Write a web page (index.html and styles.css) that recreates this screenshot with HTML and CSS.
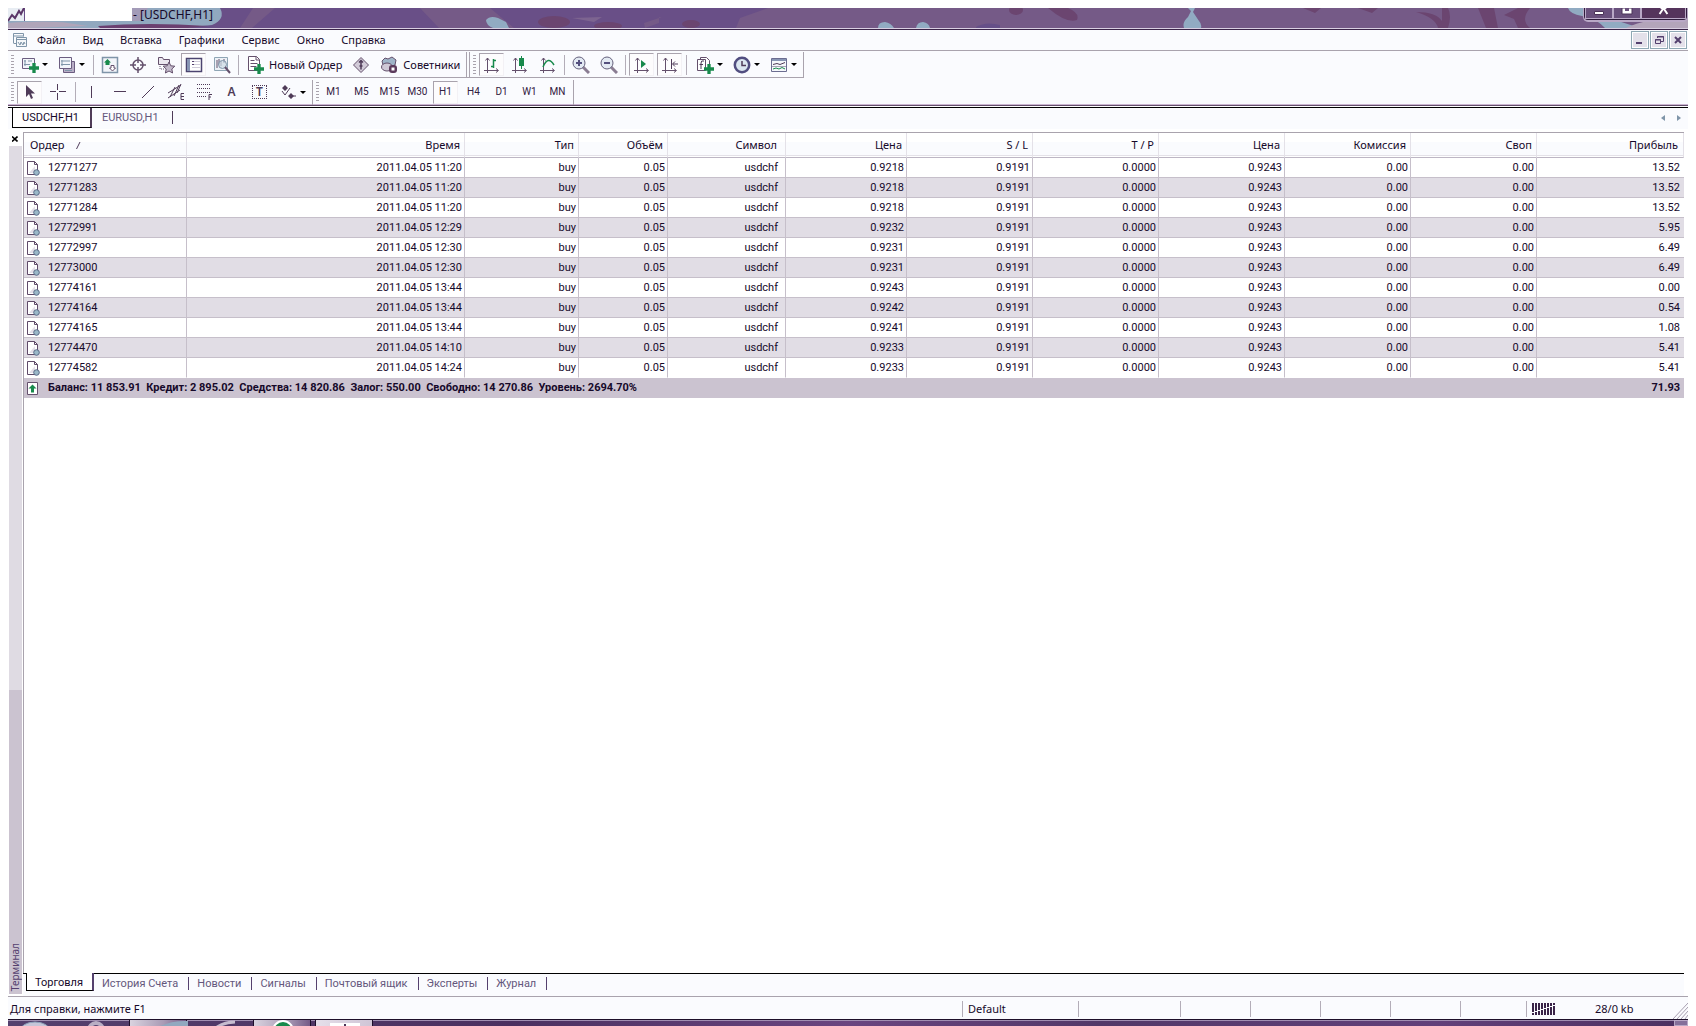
FILE: index.html
```html
<!DOCTYPE html>
<html lang="ru">
<head>
<meta charset="utf-8">
<title>[USDCHF,H1]</title>
<link rel="stylesheet" href="styles.css">
</head>
<body>
<svg class="defs" aria-hidden="true">
  <symbol id="doc" viewBox="0 0 14 15"><path d="M1.500 .5h7l3 3v10h-10z" fill="#fff" stroke="#5f4a68"/><path d="M8.500 .5v3h3" fill="none" stroke="#5f4a68"/><path d="M3 12l6-7v7z" fill="#e4dfe8"/><circle cx="10.500" cy="11.500" r="2.800" fill="#9ab8c8" stroke="#5a6a88"/></symbol>
  <symbol id="axes" viewBox="0 0 18 18"><path d="M4.500 2v15M1 14.500h14" stroke="#64506c" fill="none"/><path d="M2.500 4.500l2-2.500 2 2.500M13 12.500l2.500 2-2.500 2" fill="none" stroke="#64506c"/></symbol>
  <symbol id="plus" viewBox="0 0 9 9"><path d="M3 0h3v3h3v3H6v3H3V6H0V3h3z" fill="#188a4c"/></symbol>
</svg>
<div class="window">
  <header class="titlebar">
    <svg class="titleart" viewBox="0 0 1680 20" preserveAspectRatio="none" aria-hidden="true">
      <path fill="#694f87" d="M0 0h1680v20H0z"/>
      <path fill="#755a87" d="M245 0h22l-23 20h-12zM412 0h70l24 20h-75zM760 0h920v20H728l4-10zM636 15l18-6h-3v6l-14 5z"/>
      <path fill="#91a8bf" d="M0 13h120V0h92q6 11-8 17l-30 3H0z"/>
      <path fill="#a39bb8" d="M120 0h20l-8 13h-12z"/>
      <path fill="#b0a5b9" d="M0 15q40-3 60 0l20 3-60 2H0z"/>
      <path fill="#6b3f70" d="M90 18q50-4 110 0l-20 2H92z"/>
      <path fill="#91abc2" d="M478 12q4-5 12-2l8 4 3 6h-16q-7-3-7-8zM870 20q0-6 7-6 6 1 9 6zM908 20q1-6 7-6 6 1 7 6zM1176 20q-2-6 4-11l3-6-3-3h7l-2 4 6 9q3 3 2 7zM1560 0h26l6 12h15l25 8h-35q-8-9-23-12-12-2-14-8z"/>
      <path fill="#b3a5ba" d="M1618 20q20-10 62-12v12z"/>
      <g fill="#6b4570"><ellipse cx="546" cy="14" rx="16" ry="6"/><ellipse cx="600" cy="18" rx="14" ry="4"/><ellipse cx="683" cy="16" rx="9" ry="4"/><ellipse cx="1008" cy="2" rx="7" ry="5"/><path d="M1040 0h20q12 5 9 12-10 4-29-12zM1295 0h18l-6 5zM1350 0h20l-6 5zM1408 4q20 0 26 9V0h6q4 8 0 20h-10q-2-10-22-16zM1470 0h16l4 20h-12zM1510 0h12q-10 12 0 20h-12l-4-9-10-4z"/></g>
      <path fill="#664f88" d="M968 19q10-6 24-2v3h-24z"/><path fill="#7d6490" d="M564 10l30-1-8 5z"/>
    </svg>
    <div class="titletext"><svg class="appicon" viewBox="0 0 17 14"><path fill="#e8edf3" d="M0 0h16v13H0z"/><path d="M0 13l4-6 3 3 4-7 2 3 3-6" fill="none" stroke="#5a3668" stroke-width="2"/></svg><span class="blank"></span><span>- [USDCHF,H1]</span></div>
    <div class="winbuttons">
      <button aria-label="Свернуть"><svg viewBox="0 0 28 12"><path d="M9.500 3.500h9v3h-9z" fill="#fff" stroke="#4b3358"/></svg></button><button aria-label="Развернуть"><svg viewBox="0 0 28 12"><path d="M9 0h10v6H9z" fill="#fff" stroke="#4b3358"/><path d="M12 0h4v3h-4z" fill="#69507c"/></svg></button><button class="closebtn" aria-label="Закрыть"><svg viewBox="0 0 46 12"><path d="M19 6l4-6 4 6M20 0h6" stroke="#fff" stroke-width="2" fill="none"/></svg></button>
    </div>
  </header>

  <nav class="menubar">
    <svg class="menuicon" viewBox="0 0 15 15"><path d="M.5 10V.5h10v3M.5 3h10M.5 10.500h3" fill="none" stroke="#7f95a9"/><path d="M3.500 4.500h10v9h-10zM3.500 6.500h10" fill="#f4f7fa" stroke="#7f95a9"/><path d="M5 9l2 3 1-3 2 3 1-3 1 2" fill="none" stroke="#7f95a9"/></svg>
    <a href="#">Файл</a><a href="#">Вид</a><a href="#">Вставка</a><a href="#">Графики</a><a href="#">Сервис</a><a href="#">Окно</a><a href="#">Справка</a>
    <div class="mdi">
      <button aria-label="Свернуть окно"><svg viewBox="0 0 12 12"><path d="M2 8h6v2H2z" fill="#54406e"/></svg></button>
      <button aria-label="Восстановить окно"><svg viewBox="0 0 12 12"><path d="M4.500 4V2.500h6v5H8M4 3h7M2.500 5.500h5v4h-5zM2 6h6" fill="none" stroke="#54406e"/></svg></button>
      <button aria-label="Закрыть окно"><svg viewBox="0 0 12 12"><path d="M3 3l6 6M9 3L3 9" stroke="#54406e" stroke-width="2"/></svg></button>
    </div>
  </nav>

  <div class="toolbar toolbar-main">
    <i class="grip"></i>
    <button class="tool drop" aria-label="Новый график"><svg viewBox="0 0 18 18"><path d="M1.500 2.500h12v10h-12z" fill="#f2f5fa" stroke="#6b5d80"/><path d="M4 4v6M3 8.500h6M3 5h2M7 5h4" stroke="#7f95a9"/><use href="#plus" x="8" y="7" width="10" height="10"/></svg></button>
    <button class="tool drop" aria-label="Профили"><svg viewBox="0 0 18 18"><path d="M5.500 5.500h11v11h-11z" fill="#b9aec6" stroke="#6b5d80"/><path d="M1.500 1.500h12v11h-12z" fill="#f2f5fa" stroke="#6b5d80"/><path d="M4 4v6M3 8.500h9M3 5h9M7 14.500h7" stroke="#7f95a9"/></svg></button>
    <i class="sep"></i>
    <button class="tool" aria-label="Обзор рынка"><svg viewBox="0 0 18 18"><path d="M1.500 1.500h15v15h-15z" fill="#f2f5fa" stroke="#7f95a9" stroke-width="1.500"/><path d="M6.500 3l3.500 3.500H8.500V9h-4V6.500H3z" fill="#188a4c"/><path d="M11.500 15L8.500 12h1.500v-2.500h3V12h1.500z" fill="#fff" stroke="#64506c"/></svg></button>
    <button class="tool" aria-label="Окно данных"><svg viewBox="0 0 18 18"><circle cx="9" cy="9" r="5" fill="none" stroke="#64506c" stroke-width="1.500"/><path d="M9 1v6M9 11v6M1 9h6M11 9h6" stroke="#64506c" stroke-width="1.500"/></svg></button>
    <button class="tool" aria-label="Навигатор"><svg viewBox="0 0 18 18"><path d="M1.500 8.500v-7h4l1 2h6v5z" fill="#ece8f0" stroke="#64506c"/><path d="M3 10v3h4" fill="none" stroke="#64506c" stroke-dasharray="1 1"/><path d="M12 6l1.800 3.800 4 .4-3 2.800.8 4-3.600-2-3.600 2 .8-4-3-2.800 4-.4z" fill="#c3bacb" stroke="#64506c"/></svg></button>
    <button class="tool on" aria-label="Терминал"><svg viewBox="0 0 18 18"><path d="M1.500 2.500h15v13h-15z" fill="#fff" stroke="#4c4470" stroke-width="1.500"/><path d="M2 3h3v12H2z" fill="#8895b4"/><path d="M7 5.500h8M7 8.500h8M7 11.500h8" stroke="#d0ccd9"/><path d="M7 5.500h2M7 8.500h2" stroke="#54406e"/></svg></button>
    <button class="tool" aria-label="Тестер стратегий"><svg viewBox="0 0 18 18"><path d="M1.500 1.500h13v13h-13z" fill="#edf1f6" stroke="#8fa5b5"/><path d="M4 4v8M6 3v6M8 5v5M11 3v4" stroke="#64506c"/><circle cx="9.500" cy="8.500" r="4" fill="#cddbe6" fill-opacity=".7" stroke="#7f95a9"/><path d="M12 11l5 6" stroke="#64506c" stroke-width="2"/></svg></button>
    <i class="sep"></i>
    <button class="tool label"><svg viewBox="0 0 18 18"><path d="M2.500 .5h8l3 3v11h-11z" fill="#fff" stroke="#64506c"/><path d="M10 .5v3.500h3M4.500 4.500h4M4.500 7.500h7M4.500 10.500h6" fill="none" stroke="#64506c"/><use href="#plus" x="8" y="8" width="10" height="10"/></svg><span>Новый Ордер</span></button>
    <button class="tool" aria-label="MetaEditor"><svg viewBox="0 0 18 18"><path d="M9 1.500L16.500 9 9 16.500 1.500 9z" fill="#d2cbd8" stroke="#64506c"/><path d="M9 4.500v9M7 6.500l2-2 2 2M7.500 10h3" stroke="#4f3b58" fill="none" stroke-width="1.500"/></svg></button>
    <button class="tool label"><svg viewBox="0 0 18 18"><path d="M2 5l3-3 3 1 4-2 4 3-1 5-6 2-6-2z" fill="#9fb4c8" stroke="#64506c"/><ellipse cx="7" cy="11" rx="5.500" ry="4" fill="#cfc8d6" stroke="#64506c"/><rect x="9" y="9" width="8" height="8" rx="3" fill="#5c3b5c"/><path d="M11.500 11.500h3v3h-3z" fill="#fff"/></svg><span>Советники</span></button>
    <i class="endline"></i>
    <i class="endline"></i><i class="grip"></i>
    <button class="tool on" aria-label="Бары"><svg viewBox="0 0 18 18"><use href="#axes"/><path d="M10.500 3v9M8 10.500h2M11 4.500h2" stroke="#188a4c" stroke-width="1.500"/></svg></button>
    <button class="tool" aria-label="Свечи"><svg viewBox="0 0 18 18"><use href="#axes"/><path d="M10.500 0v13" stroke="#188a4c"/><path d="M8 2h5v8H8z" fill="#188a4c"/></svg></button>
    <button class="tool" aria-label="Линия"><svg viewBox="0 0 18 18"><use href="#axes"/><path d="M4 11q5-12 11-2" stroke="#188a4c" stroke-width="1.500" fill="none"/></svg></button>
    <i class="sep"></i>
    <button class="tool" aria-label="Увеличить"><svg viewBox="0 0 18 18"><path d="M11 11l6 6" stroke="#8a7d92" stroke-width="3"/><circle cx="7" cy="7" r="6" fill="#e3eaf3" stroke="#64607c"/><path d="M7 4v6M4 7h6" stroke="#54507e" stroke-width="2"/></svg></button>
    <button class="tool" aria-label="Уменьшить"><svg viewBox="0 0 18 18"><path d="M11 11l6 6" stroke="#8a7d92" stroke-width="3"/><circle cx="7" cy="7" r="6" fill="#e3eaf3" stroke="#64607c"/><path d="M4 7h6" stroke="#54507e" stroke-width="2"/></svg></button>
    <i class="sep"></i>
    <button class="tool on" aria-label="Автопрокрутка"><svg viewBox="0 0 18 18"><use href="#axes"/><path d="M8 4l5 4-5 4z" fill="#188a4c"/></svg></button>
    <button class="tool on" aria-label="Сдвиг графика"><svg viewBox="0 0 18 18"><use href="#axes"/><path d="M10.500 3v10M17 8h-5M14 5.500L11.500 8l2.500 2.500" stroke="#4f3b58" fill="none"/></svg></button>
    <i class="sep"></i>
    <button class="tool drop wide" aria-label="Индикаторы"><svg viewBox="0 0 18 18"><path d="M4.500 4V1.500h6l3 3v8h-3" fill="#fff" stroke="#64506c"/><path d="M1.500 3.500h8v11h-8z" fill="#fff" stroke="#64506c"/><path d="M8 5q-3-1-3 2v6M3.500 8.500H7" fill="none" stroke="#4f3b58"/><use href="#plus" x="8" y="8" width="10" height="10"/></svg></button>
    <button class="tool drop" aria-label="Периоды"><svg viewBox="0 0 18 18"><circle cx="9" cy="9" r="7.200" fill="#dbe6f0" stroke="#514e80" stroke-width="2.500"/><path d="M9 5v4.500h4" fill="none" stroke="#4f3b58" stroke-width="1.500"/></svg></button>
    <button class="tool drop" aria-label="Шаблоны"><svg viewBox="0 0 18 18"><path d="M1.500 2.500h15v13h-15z" fill="#f5f8fb" stroke="#6b6d90"/><path d="M2 3h14v2H2z" fill="#8895b4"/><path d="M3 8.500l4-1 3 1 5-2" fill="none" stroke="#4f3b58"/><path d="M2 10.500h14" stroke="#a9a3b5"/><path d="M3 13l3-1 3 1 3-1.500 3 1.500" fill="none" stroke="#188a4c"/></svg></button>
    <i class="lastline"></i>
  </div>

  <div class="toolbar toolbar-draw">
    <i class="grip"></i>
    <button class="tool on" aria-label="Курсор"><svg viewBox="0 0 18 18"><path d="M5 2v12l3-3 2 5 2-1-2-4.500h4z" fill="#4f3b58"/></svg></button>
    <button class="tool" aria-label="Перекрестие"><svg viewBox="0 0 18 18"><path d="M8.500 1v6M8.500 10v7M1 8.500h6M10 8.500h7" stroke="#4f3b58"/></svg></button>
    <i class="sep"></i>
    <button class="tool" aria-label="Вертикальная линия"><svg viewBox="0 0 18 18"><path d="M8.500 3v12" stroke="#4f3b58"/></svg></button>
    <button class="tool" aria-label="Горизонтальная линия"><svg viewBox="0 0 18 18"><path d="M3 8.500h12" stroke="#4f3b58"/></svg></button>
    <button class="tool" aria-label="Трендовая линия"><svg viewBox="0 0 18 18"><path d="M3 15L15 3" stroke="#4f3b58"/></svg></button>
    <button class="tool" aria-label="Канал"><svg viewBox="0 0 18 18"><path d="M1 10L14 2M1 15l12-8M3 14L8 4M7 13l5-11M10 10l4-9" stroke="#4f3b58"/><path d="M17 10.500h-3v6h3M14 13.500h3" stroke="#4f3b58" fill="none"/></svg></button>
    <button class="tool" aria-label="Фибоначчи"><svg viewBox="0 0 18 18"><path d="M2 1.500h13M2 5.500h13M2 9.500h13M2 13.500h9" stroke="#4f3b58" stroke-dasharray="1 1"/><path d="M17 11.500h-3v5.500M14 14h2" stroke="#4f3b58" fill="none"/></svg></button>
    <button class="tool letter">A</button>
    <button class="tool letter boxed" aria-label="Метка"><span>T</span></button>
    <button class="tool drop" aria-label="Стрелки"><svg viewBox="0 0 18 18"><path d="M6 2l3 3-3 3-3-3zM2 5h4M12 10l3 3-3 3-3-3z" fill="#4f3b58"/><path d="M3 8l3 4 5-7M12 13h5" fill="none" stroke="#4f3b58"/></svg></button>
    <i class="endline"></i><i class="grip"></i>
    <button class="tool tf">M1</button><button class="tool tf">M5</button><button class="tool tf">M15</button><button class="tool tf">M30</button><button class="tool tf on">H1</button><button class="tool tf">H4</button><button class="tool tf">D1</button><button class="tool tf">W1</button><button class="tool tf">MN</button>
    <i class="lastline"></i>
  </div>

  <div class="charttabs">
    <a class="tab active" href="#">USDCHF,H1</a><a class="tab" href="#">EURUSD,H1</a>
    <div class="scrollers"><button aria-label="Назад"><svg viewBox="0 0 4 6"><path d="M4 0v6L0 3z" fill="#7f95a9"/></svg></button><button aria-label="Вперёд"><svg viewBox="0 0 4 6"><path d="M0 0v6l4-3z" fill="#7f95a9"/></svg></button></div>
  </div>

  <main class="terminal">
    <aside class="rail">
      <button class="railclose" aria-label="Закрыть терминал"><svg viewBox="0 0 6 6"><path d="M0 .5l5.500 5M5.500 .5L0 5.500" stroke="#000" stroke-width="1.600"/></svg></button>
      <div class="railtop"></div>
      <div class="railbottom"><span>Терминал</span></div>
    </aside>
    <section class="pane">
      <div class="tablewrap">
      <table>
        <colgroup><col class="c-order"><col class="c-time"><col class="c-type"><col class="c-vol"><col class="c-sym"><col class="c-open"><col class="c-num"><col class="c-num"><col class="c-num"><col class="c-num"><col class="c-num"><col></colgroup>
        <thead><tr><th>Ордер<svg class="sort" viewBox="0 0 5 7"><path d="M.5 7L4 0" stroke="#4f3b58" fill="none"/></svg></th><th>Время</th><th>Тип</th><th>Объём</th><th>Символ</th><th>Цена</th><th>S / L</th><th>T / P</th><th>Цена</th><th>Комиссия</th><th>Своп</th><th>Прибыль</th></tr></thead>
        <tbody>
          <tr><td><svg><use href="#doc"/></svg>12771277</td><td>2011.04.05 11:20</td><td>buy</td><td>0.05</td><td>usdchf</td><td>0.9218</td><td>0.9191</td><td>0.0000</td><td>0.9243</td><td>0.00</td><td>0.00</td><td>13.52</td></tr>
          <tr><td><svg><use href="#doc"/></svg>12771283</td><td>2011.04.05 11:20</td><td>buy</td><td>0.05</td><td>usdchf</td><td>0.9218</td><td>0.9191</td><td>0.0000</td><td>0.9243</td><td>0.00</td><td>0.00</td><td>13.52</td></tr>
          <tr><td><svg><use href="#doc"/></svg>12771284</td><td>2011.04.05 11:20</td><td>buy</td><td>0.05</td><td>usdchf</td><td>0.9218</td><td>0.9191</td><td>0.0000</td><td>0.9243</td><td>0.00</td><td>0.00</td><td>13.52</td></tr>
          <tr><td><svg><use href="#doc"/></svg>12772991</td><td>2011.04.05 12:29</td><td>buy</td><td>0.05</td><td>usdchf</td><td>0.9232</td><td>0.9191</td><td>0.0000</td><td>0.9243</td><td>0.00</td><td>0.00</td><td>5.95</td></tr>
          <tr><td><svg><use href="#doc"/></svg>12772997</td><td>2011.04.05 12:30</td><td>buy</td><td>0.05</td><td>usdchf</td><td>0.9231</td><td>0.9191</td><td>0.0000</td><td>0.9243</td><td>0.00</td><td>0.00</td><td>6.49</td></tr>
          <tr><td><svg><use href="#doc"/></svg>12773000</td><td>2011.04.05 12:30</td><td>buy</td><td>0.05</td><td>usdchf</td><td>0.9231</td><td>0.9191</td><td>0.0000</td><td>0.9243</td><td>0.00</td><td>0.00</td><td>6.49</td></tr>
          <tr><td><svg><use href="#doc"/></svg>12774161</td><td>2011.04.05 13:44</td><td>buy</td><td>0.05</td><td>usdchf</td><td>0.9243</td><td>0.9191</td><td>0.0000</td><td>0.9243</td><td>0.00</td><td>0.00</td><td>0.00</td></tr>
          <tr><td><svg><use href="#doc"/></svg>12774164</td><td>2011.04.05 13:44</td><td>buy</td><td>0.05</td><td>usdchf</td><td>0.9242</td><td>0.9191</td><td>0.0000</td><td>0.9243</td><td>0.00</td><td>0.00</td><td>0.54</td></tr>
          <tr><td><svg><use href="#doc"/></svg>12774165</td><td>2011.04.05 13:44</td><td>buy</td><td>0.05</td><td>usdchf</td><td>0.9241</td><td>0.9191</td><td>0.0000</td><td>0.9243</td><td>0.00</td><td>0.00</td><td>1.08</td></tr>
          <tr><td><svg><use href="#doc"/></svg>12774470</td><td>2011.04.05 14:10</td><td>buy</td><td>0.05</td><td>usdchf</td><td>0.9233</td><td>0.9191</td><td>0.0000</td><td>0.9243</td><td>0.00</td><td>0.00</td><td>5.41</td></tr>
          <tr><td><svg><use href="#doc"/></svg>12774582</td><td>2011.04.05 14:24</td><td>buy</td><td>0.05</td><td>usdchf</td><td>0.9233</td><td>0.9191</td><td>0.0000</td><td>0.9243</td><td>0.00</td><td>0.00</td><td>5.41</td></tr>
        </tbody>
        <tfoot><tr><td colspan="11"><svg viewBox="0 0 14 15"><path d="M1.500 1.500h10v12h-10z" fill="#fff" stroke="#64506c"/><path d="M6.500 3.500l4 4H8v4H5v-4H2.500z" fill="#188a4c"/></svg>Баланс: 11 853.91&nbsp; Кредит: 2 895.02&nbsp; Средства: 14 820.86&nbsp; Залог: 550.00&nbsp; Свободно: 14 270.86&nbsp; Уровень: 2694.70%</td><td>71.93</td></tr></tfoot>
      </table>
      </div>
      <nav class="bottomtabs">
        <a class="tab active" href="#">Торговля</a><a class="tab" href="#">История Счета</a><a class="tab" href="#">Новости</a><a class="tab" href="#">Сигналы</a><a class="tab" href="#">Почтовый ящик</a><a class="tab" href="#">Эксперты</a><a class="tab" href="#">Журнал</a>
      </nav>
    </section>
  </main>

  <footer class="statusbar">
    <span class="hint">Для справки, нажмите F1</span>
    <span class="cell profile">Default</span>
    <span class="cell date"></span>
    <span class="cell price"></span><span class="cell price"></span><span class="cell price"></span><span class="cell price"></span><span class="cell volume"></span>
    <span class="cell traffic"><svg viewBox="0 0 24 12"><path d="M1 0v9M4 0v8M7 0v7M10 0v6M13 0v5M16 0v4M19 0v3M22 0v2M1 10v2M4 9v3M7 8v4M10 7v5M13 6v6M16 5v7M19 4v8M22 3v9" stroke="#3a2448" stroke-width="2"/></svg><span>28/0 kb</span></span>
    <svg class="sizegrip" viewBox="0 0 15 18"><path d="M0 18L15 2M4 18L15 6M8 18l7-8M12 18l3-4" stroke="#a89fb0"/></svg>
  </footer>
  <div class="taskbar" aria-hidden="true">
    <svg class="start" viewBox="0 0 121 7"><ellipse cx="27" cy="11" rx="15" ry="9" fill="#c6c5d8" stroke="#8fa5bd"/><circle cx="88" cy="10" r="7" fill="none" stroke="#b9aec4" stroke-width="4"/></svg>
    <span class="task"><svg viewBox="0 0 58 7"><path d="M28 7Q42 0 58 1v6z" fill="#91a8bf"/></svg></span>
    <svg class="quick" viewBox="0 0 62 7"><path d="M26 7q8-5 18-5" stroke="#c6bccf" stroke-width="3" fill="none"/></svg>
    <span class="task"><svg viewBox="0 0 58 7"><circle cx="29" cy="11" r="10" fill="#188a4c" stroke="#fff" stroke-width="2"/></svg></span>
    <span class="task bright"><svg viewBox="0 0 58 7"><path d="M14 3h30v4H14z" fill="#fff"/><path d="M28 4h2v3h-2z" fill="#4b3358"/></svg></span>
    <span class="showdesk"></span>
  </div>
</div>
</body>
</html>
```
FILE: styles.css
```css
* { box-sizing: border-box; }
body { margin: 0; background: #fff; color: #16092a; font: 11px/14px "Noto Sans", sans-serif; }
button { margin: 0; padding: 0; border: 0; background: none; color: inherit; font: inherit; }
a { color: inherit; text-decoration: none; }
svg { display: block; flex: none; }
.defs { position: absolute; width: 0; height: 0; }

.window { display: flex; flex-direction: column; height: 100vh; padding: 8px 8px 0; overflow: hidden; }
.window > * { flex: none; }

.titlebar { position: relative; display: flex; justify-content: space-between; height: 22px; border-bottom: 1px solid #3a2448; background: #d9cfe2; }
.titleart { position: absolute; inset: 0; width: 100%; height: 20px; }
.titletext { position: relative; display: flex; height: 20px; font-size: 12px; white-space: nowrap; }
.appicon { width: 17px; height: 14px; }
.blank { flex: none; width: 107px; height: 13px; margin-right: 1px; background: #fff; }
.winbuttons { position: relative; display: flex; height: 12px; margin-right: 1px; border: 1px solid #2f1c3c; border-top: 0; border-radius: 0 0 4px 4px; background: #69507c; box-shadow: 0 1px 0 1px #b9a8c6; clip-path: inset(0 -2px -2px -2px); }
.winbuttons button { display: flex; justify-content: center; width: 28px; height: 11px; border: 1px solid #b9a8c6; border-top: 0; }
.winbuttons .closebtn { width: 45px; background: #55345c; }
.winbuttons svg { width: 28px; height: 12px; }
.winbuttons .closebtn svg { width: 45px; }

.menubar { display: flex; align-items: center; gap: 17px; height: 21px; padding-left: 5px; border-bottom: 1px solid #a9a3ad; background: #fafbfe; }
.menuicon { width: 15px; height: 15px; margin-right: -8px; }
.mdi { display: flex; gap: 1px; margin-left: auto; margin-right: 1px; }
.mdi button { width: 18px; height: 18px; padding: 2px; border: 1px solid #8fa8b4; background: #e4e1ea; box-shadow: inset 0 0 0 1px #fff; }
.mdi svg { width: 12px; height: 12px; }

.toolbar { display: flex; align-items: center; gap: 3px; height: 27px; padding-left: 3px; background: #fafbfe; }
.toolbar-main { background: linear-gradient(#a9a3ad, #a9a3ad) left bottom / 796px 1px no-repeat #fafbfe; }
.toolbar-draw { padding-top: 2px; border-bottom: 1px solid #cbb5d2; }
.grip { width: 3px; height: 20px; background: repeating-linear-gradient(#a9a3ad 0 1px, transparent 1px 3px); }
.sep { width: 1px; height: 20px; margin-left: 1px; background: #b3adb8; }
.sep:nth-child(4) { margin-left: 2px; }
.endline { width: 1px; height: 25px; background: #a9a3ad; }
.endline + .endline { margin-left: -1px; }
.lastline { width: 1px; height: 25px; background: #a9a3ad; }
.tool { display: flex; align-items: center; justify-content: center; width: 25px; height: 23px; border: 1px solid transparent; }
.tool svg { width: 18px; height: 18px; }
.tool.on { border-color: #a9a3ad #f3f1f5 #f3f1f5 #a9a3ad; background: #fdfcfd; }
.tool.drop { gap: 3px; width: 34px; }
.tool.wide { width: 36px; padding-left: 2px; }
.tool.drop::after { content: ""; border: 3px solid transparent; border-top-color: #000; border-bottom: 0; }
.tool.label { gap: 5px; width: auto; padding: 0 2px 0 3px; }
.letter { color: #4f3b58; font-size: 12px; font-weight: 600; }
.boxed span { padding: 0 3px; border: 1px dotted #4f3b58; line-height: 12px; }
.tf { color: #33203f; font: 10px/14px Roboto, sans-serif; }
.toolbar-draw .grip ~ .grip { margin-right: -1px; }

.tab { color: #64577c; font: 11px/13px Roboto, sans-serif; }
.tab.active { background: #fff; color: #16092a; border: solid #000; border-width: 0 2px 1px 1px; }
.charttabs { display: flex; height: 24px; margin-bottom: 3px; padding: 2px 0 0 4px; border-top: 1px solid #64506c; background: linear-gradient(#fff 1px, #000 1px 2px, #fafbfe 2px); }
.charttabs .tab { height: 13px; margin-top: 3px; padding: 0 13px 0 10px; border-right: 1px solid #4f3b58; }
.charttabs .active { height: 20px; margin-top: 0; padding: 0 11px 0 9px; line-height: 19px; border-right-width: 2px; }
.scrollers { display: flex; gap: 12px; margin: 7px 7px 0 auto; }
.scrollers svg { width: 4px; height: 6px; }
.scrollers button { height: 6px; }

.window > .terminal { display: flex; flex: 1; min-height: 0; }
.rail { display: flex; flex-direction: column; width: 15px; padding: 0 1px; }
.railclose { height: 14px; padding: 3px; }
.railclose svg { width: 6px; height: 6px; }
.railtop { flex: 547; background: #dfdbe3; }
.railbottom { display: flex; align-items: flex-end; flex: 303; margin-bottom: 2px; padding-bottom: 3px; background: #cbc3d0; }
.railbottom span { writing-mode: vertical-rl; transform: rotate(180deg); color: #54406e; font-size: 10px; line-height: 13px; }
.pane { display: flex; flex-direction: column; flex: 1; min-width: 0; margin-right: 4px; border-top: 1px solid #a9a3ad; }
.tablewrap { flex: 1; min-height: 0; overflow: hidden; border-left: 1px solid #a9a3ad; }

table { width: 100%; table-layout: fixed; border-collapse: separate; border-spacing: 0; }
.c-order { width: 163px; }
.c-time { width: 278px; }
.c-type { width: 114px; }
.c-vol { width: 89px; }
.c-sym { width: 118px; }
.c-open { width: 121px; }
.c-num { width: 126px; }
th { height: 25px; padding: 0 4px 1px; border-right: 1px solid #e4e1e8; border-bottom: 1px solid #bdb6c4; background: linear-gradient(#fff 9px, #fafbfe 9px); box-shadow: inset 0 -1px #fff, inset 0 -2px #e4e1e8; font-weight: 400; text-align: right; }
th:first-child { padding-left: 6px; text-align: left; }
th:nth-child(5) { padding-right: 8px; }
th:last-child { padding-right: 5px; }
.sort { display: inline-block; width: 5px; height: 7px; margin-left: 12px; }
td { height: 20px; padding: 0 2px 0 3px; border-right: 1px solid #c6bfca; border-bottom: 1px solid #c6bfca; font: 11px/14px Roboto, sans-serif; text-align: right; white-space: nowrap; }
td:nth-child(5) { padding-right: 7px; }
td:last-child { padding-right: 4px; border-right: 0; }
td:first-child { padding-left: 2px; text-align: left; }
td svg { float: left; width: 14px; height: 15px; margin: 0 8px -1px 0; }
tbody tr:nth-child(even) { background: #e1dde5; }
tbody tr:last-child td { border-bottom-color: #fff; }
tfoot td { border: 0; background: #cbc3d0; font-weight: 700; }

.bottomtabs { display: flex; height: 23px; padding-left: 3px; background: linear-gradient(#000 1px, #fafbfe 1px); }
.bottomtabs .tab { height: 13px; margin-top: 4px; padding: 0 10px 0 8px; border-right: 1px solid #54406e; }
.bottomtabs .active { height: 18px; margin-top: 0; padding: 0 9px 0 8px; line-height: 19px; border-right-width: 2px; }

.statusbar { display: flex; align-items: center; height: 23px; padding-top: 2px; border-top: 1px solid #a9a3ad; background: #fafbfe; }
.hint { flex: 1; padding-left: 2px; }
.cell { display: flex; align-items: center; height: 16px; padding-left: 5px; border-left: 1px solid #b3adb8; }
.profile { width: 116px; }
.date { width: 102px; }
.price { width: 70px; }
.volume { width: 66px; }
.traffic { gap: 39px; width: 147px; }
.traffic svg { width: 24px; height: 12px; }
.sizegrip { width: 15px; height: 18px; align-self: flex-end; }

.taskbar { display: flex; height: 7px; border-top: 1px solid #1d0f2a; background: linear-gradient(#a18fb2 1px, transparent 1px), linear-gradient(90deg, #54406e, #4b3060 30%, #6a4580 50%, #523868 65%, #62407a 85%, #4b3060); overflow: hidden; }
.taskbar svg { height: 7px; }
.start { width: 121px; }
.quick { width: 62px; }
.task { width: 58px; height: 7px; margin-right: 4px; border: solid #1d0f2a; border-width: 0 1px; background: linear-gradient(90deg, #d9d3df, #a99bb5 60%, #755a87); }
.task.bright { background: linear-gradient(90deg, #e6e0ea, #cfc5d6); }
.showdesk { width: 14px; margin-left: auto; border: 1px solid #b9a8c6; background: #85709a; }
```
